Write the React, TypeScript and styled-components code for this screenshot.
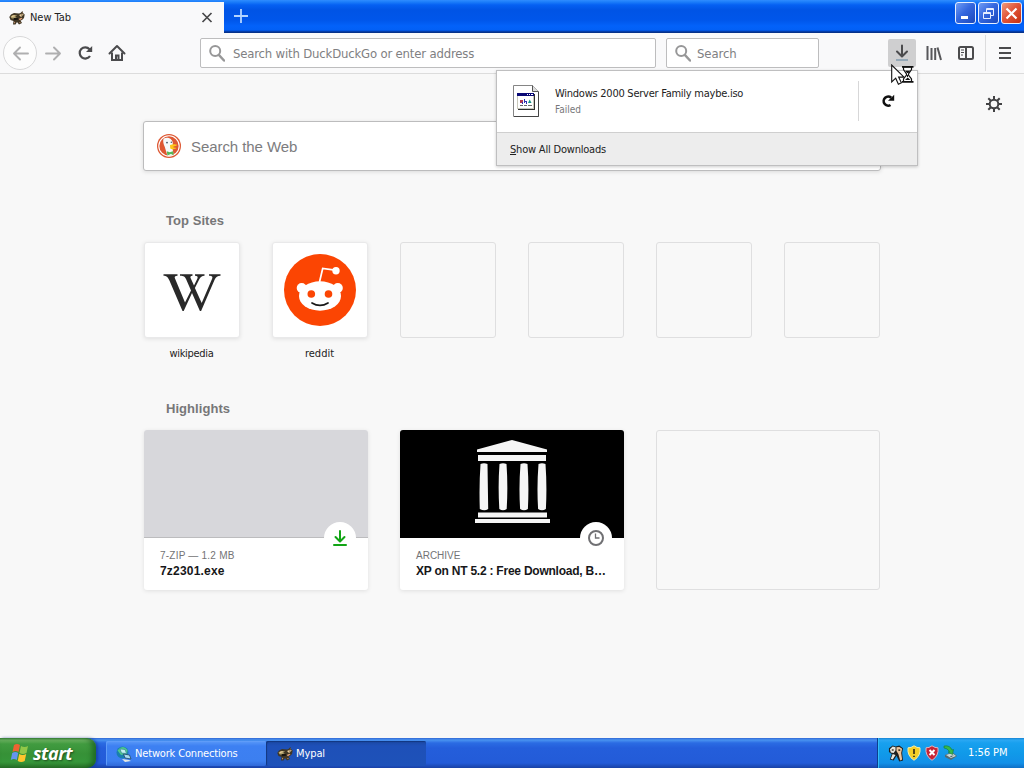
import React from "react";
import styled, { createGlobalStyle } from "styled-components";

const tahoma = `"DejaVu Sans Condensed", "DejaVu Sans", sans-serif`;
const arial = `"Liberation Sans", Arial, sans-serif`;

const GlobalStyle = createGlobalStyle`
  * { box-sizing: border-box; }
  body { margin: 0; background: #f9f9fa; overflow: hidden; }
  svg { display: block; flex: none; }
`;

const Screen = styled.div`
  position: relative;
  width: 1024px;
  height: 768px;
  display: flex;
  flex-direction: column;
  background: #f8f8f8;
  font-family: ${tahoma};
  font-stretch: condensed;
  font-size: 11px;
  color: #222;
  overflow: hidden;
`;

const Text = styled.span<{ $size?: number; $track?: number; $color?: string; $bold?: boolean; $sans?: boolean; $lh?: number }>`
  font-family: ${(p) => (p.$sans ? arial : tahoma)};
  font-size: ${(p) => p.$size ?? 11}px;
  line-height: ${(p) => p.$lh ?? 16}px;
  letter-spacing: ${(p) => p.$track ?? 0}px;
  color: ${(p) => p.$color ?? "#222"};
  font-weight: ${(p) => (p.$bold ? 700 : 400)};
  white-space: nowrap;
`;

const TitleBar = styled.header`
  height: 33px;
  flex: none;
  display: flex;
  align-items: flex-start;
  background: linear-gradient(#2f8cff 0, #1b7dfa 2px, #0560f2 5px, #0054e5 10px, #0056ea 20px, #0362fa 26px, #0260f6 30px, #0147c8 31px, #06318a 32px, #06318a 33px);
`;

const Tab = styled.div`
  width: 224px;
  height: 31px;
  margin-top: 2px;
  padding: 0 11px 0 9px;
  display: flex;
  align-items: center;
  gap: 5px;
  background: #f9f9fa;
`;

const TabClose = styled.div`
  margin-left: auto;
`;

const NewTab = styled.div`
  padding: 9px 0 0 10px;
`;

const WindowButtons = styled.div`
  margin: 2px 2px 0 auto;
  display: flex;
  gap: 2px;
`;

const WindowButton = styled.div<{ $close?: boolean }>`
  width: 21px;
  height: 22px;
  border: 1px solid #e6efff;
  border-radius: 3px;
  display: grid;
  place-items: center;
  background: ${(p) =>
    p.$close
      ? "linear-gradient(135deg, #ee9a7c, #e2573a 45%, #c53010)"
      : "linear-gradient(135deg, #6f9cf4, #3467df 45%, #1b48bb)"};
`;

const Toolbar = styled.nav`
  height: 41px;
  flex: none;
  display: flex;
  align-items: center;
  padding: 0 4px 0 3px;
  background: #f9f9fa;
  border-bottom: 1px solid #dcdcdc;
`;

const BackButton = styled.div`
  width: 34px;
  height: 34px;
  border: 1px solid #d8d8d9;
  border-radius: 50%;
  display: grid;
  place-items: center;
  background: #fdfdfd;
`;

const ToolIcon = styled.div<{ $active?: boolean; $width?: number }>`
  width: ${(p) => p.$width ?? 32}px;
  height: 28px;
  display: grid;
  place-items: center;
  border-radius: 2px;
  background: ${(p) => (p.$active ? "#cfcfd0" : "transparent")};
`;

const Field = styled.div<{ $width: number; $left: number; $gap: number }>`
  width: ${(p) => p.$width}px;
  height: 30px;
  margin-left: ${(p) => p.$left}px;
  padding: 1px 0 0 8px;
  display: flex;
  align-items: center;
  gap: ${(p) => p.$gap}px;
  background: #fff;
  border: 1px solid #bdbdbe;
  border-radius: 2px;
`;

const ToolEnd = styled.div`
  margin-left: auto;
  display: flex;
  align-items: center;
`;

const ToolDivider = styled.div`
  width: 1px;
  height: 36px;
  margin: 0 4px 0 5px;
  background: #dcdcdd;
`;

const Page = styled.main`
  flex: 1;
  display: flex;
  justify-content: space-between;
  padding-left: 143px;
`;

const Column = styled.div`
  width: 738px;
  padding-top: 47px;
`;

const Settings = styled.div`
  padding: 22px 22px 0 0;
`;

const WebSearch = styled.div`
  height: 50px;
  display: flex;
  align-items: center;
  gap: 9px;
  padding-left: 12px;
  background: #fff;
  border: 1px solid #bcbcbd;
  border-radius: 3px;
  box-shadow: 0 1px 4px rgba(0, 0, 0, 0.12);
`;

const WebSearchHint = styled.span`
  padding-top: 2px;
  font: 400 15px/18px ${arial};
  letter-spacing: -0.07px;
  color: #7c7c7e;
`;

const SectionTitle = styled.h2<{ $top: number }>`
  margin: ${(p) => p.$top}px 0 0 23px;
  height: 16px;
  font: 700 13px/16px ${arial};
  letter-spacing: 0.05px;
  color: #777778;
`;

const Sites = styled.div`
  margin: 13px 0 0 1px;
  display: flex;
  gap: 32px;
`;

const Site = styled.div`
  width: 96px;
  height: 120px;
  display: flex;
  flex-direction: column;
  align-items: center;
  gap: 8px;
`;

const SiteName = styled.div`
  height: 16px;
  width: 95px;
  align-self: flex-start;
  text-align: center;
`;

const Tile = styled.div<{ $empty?: boolean }>`
  flex: none;
  width: 96px;
  height: 96px;
  display: grid;
  place-items: center;
  border-radius: 3px;
  border: 1px solid ${(p) => (p.$empty ? "#dfdfe0" : "#e9e9ea")};
  background: ${(p) => (p.$empty ? "transparent" : "#fff")};
  box-shadow: ${(p) => (p.$empty ? "none" : "0 1px 4px rgba(12, 12, 13, 0.1)")};
`;

const Cards = styled.div`
  margin: 13px 0 0 1px;
  display: flex;
  gap: 32px;
`;

const Card = styled.article<{ $empty?: boolean }>`
  width: 224px;
  height: 160px;
  border-radius: 3px;
  border: ${(p) => (p.$empty ? "1px solid #dfdfe0" : "none")};
  background: ${(p) => (p.$empty ? "transparent" : "#fff")};
  box-shadow: ${(p) => (p.$empty ? "none" : "0 1px 4px rgba(12, 12, 13, 0.1)")};
`;

const Preview = styled.div<{ $color: string }>`
  position: relative;
  height: 108px;
  display: flex;
  justify-content: center;
  border-radius: 3px 3px 0 0;
  border-bottom: 1px solid ${(p) => (p.$color === "#000" ? "#000" : "#bcbcbe")};
  background: ${(p) => p.$color};
`;

const Badge = styled.div`
  position: absolute;
  right: 12px;
  bottom: -17px;
  width: 32px;
  height: 32px;
  display: grid;
  place-items: center;
  border-radius: 50%;
  background: #fff;
`;

const CardText = styled.div`
  padding: 10px 16px 0;
  display: flex;
  flex-direction: column;
`;

const Panel = styled.section`
  position: absolute;
  left: 496px;
  top: 70px;
  width: 422px;
  height: 96px;
  border: 1px solid #bfbfc0;
  background: #fff;
  box-shadow: 0 1px 3px rgba(0, 0, 0, 0.2);
`;

const DownloadRow = styled.div`
  height: 62px;
  display: flex;
  align-items: center;
  padding: 0 0 1px 16px;
  border-bottom: 1px solid #cfcfcf;
`;

const DownloadText = styled.div`
  flex: 1;
  margin-left: 16px;
  padding-top: 1px;
  display: flex;
  flex-direction: column;
`;

const Retry = styled.div`
  width: 59px;
  height: 40px;
  display: grid;
  place-items: center;
  border-left: 1px solid #d7d7d8;
`;

const ShowAll = styled.div`
  height: 32px;
  padding: 9px 13px 7px;
  display: flex;
  background: #ededed;
`;

const Cursor = styled.div`
  position: absolute;
  left: 891px;
  top: 64px;
`;

const Taskbar = styled.footer`
  height: 30px;
  flex: none;
  display: flex;
  background: linear-gradient(#3168d5 0, #4993f0 2px, #2b6be3 5px, #245edb 10px, #235bd8 25px, #1941a5 30px);
`;

const Start = styled.div`
  width: 96px;
  height: 30px;
  padding: 0 0 0 10px;
  display: flex;
  align-items: center;
  gap: 4px;
  border-radius: 0 9px 9px 0;
  background: linear-gradient(#3f8a3e 0, #6cb562 2px, #419b40 6px, #369137 16px, #36963a 24px, #2b752b 30px);
  box-shadow: inset -4px 0 5px rgba(14, 76, 20, 0.55), 2px 0 3px rgba(12, 50, 130, 0.55);
`;

const StartLabel = styled.span`
  font: italic 700 18px/24px "Open Sans", "Noto Sans", sans-serif;
  letter-spacing: -0.45px;
  color: #fff;
  text-shadow: 1px 1px 2px #1d4d1c;
`;

const Tasks = styled.div`
  flex: 1;
  display: flex;
  padding: 3px 0 2px 10px;
`;

const Task = styled.div<{ $active?: boolean }>`
  width: 160px;
  display: flex;
  align-items: center;
  gap: 3px;
  padding-left: ${(p) => (p.$active ? 11 : 10)}px;
  border-radius: 2px;
  background: ${(p) =>
    p.$active ? "linear-gradient(#1b48a2, #1e50b8 5px, #1e52b9)" : "linear-gradient(#5b9af9, #3d80f2 5px, #3c7ff0 20px, #3069d8)"};
  box-shadow: ${(p) => (p.$active ? "inset 1px 1px 1px #123780" : "inset 1px 1px 0 #5f9cf8")};
`;

const TaskName = styled.div`
  padding-top: 1px;
`;

const Tray = styled.div`
  width: 147px;
  display: flex;
  align-items: center;
  gap: 2px;
  padding: 0 0 0 10px;
  border-left: 1px solid #0c3f8e;
  background: linear-gradient(#1683d3 0, #2ba8f3 2px, #18a0ef 5px, #109ae9 15px, #1290e8 25px, #0f6fc5 30px);
  box-shadow: inset 1px 0 0 #34bcf8;
`;

const Clock = styled.span`
  margin-left: 8px;
`;

function Magnifier() {
  return (
    <svg width="16" height="18" viewBox="0 0 16 18" fill="none" stroke="#979798">
      <circle cx="6.2" cy="6" r="5" strokeWidth="2" />
      <path d="M9.8 9.9 15 15.5" strokeWidth="2.4" strokeLinecap="round" />
    </svg>
  );
}

function Arrow({ back }: { back?: boolean }) {
  return (
    <svg width="17" height="15" viewBox="0 0 17 15" fill="none" stroke="#afafb0" strokeWidth="1.9" strokeLinecap="round" strokeLinejoin="round">
      <path d={back ? "M8 1.5 2 7.5l6 6M2 7.5h14" : "M9 1.5 15 7.5l-6 6M15 7.5H1"} />
    </svg>
  );
}

function Raccoon() {
  return (
    <svg width="16" height="16" viewBox="0 0 16 16">
      <path d="M.3 7 2 4.500 5 3l5 .500L11.500 3l2-2L14 3l1.700 1.500L15 8l-2 2-1.500.500L13 13l-3 1.500L8 12l-1.500 2.500H4L4.500 11 1.500 10z" fill="#413724" />
      <path d="M1.500 6.500 4 5l4 .2L6 7l2 1-2 1-3.500-.700z" fill="#b0a16c" />
      <path d="M4.500 8h4l1.500 1.500-5 .7z" fill="#17140f" />
      <path d="m10 5 3-1.200 1.800.8L12 7zM2.500 6l3-.8.5.7-3 1z" fill="#efcf9c" />
      <path d="m9.500 9 3-1.200 1 .8-2.500 1.700zM5 13.500l.4-2 .9 1.200zM10 12.500l1.200-.700.300 1.200zM12.800 3.200l.500-1 .3 1z" fill="#dfa17a" />
      <path d="M12.400 4.500h1v1h-1z" fill="#111" />
    </svg>
  );
}

function Duck() {
  return (
    <svg width="26" height="26" viewBox="0 0 26 26">
      <circle cx="13" cy="13" r="12" fill="#de5833" />
      <circle cx="13" cy="13" r="10.2" fill="none" stroke="#fff" strokeWidth="1.1" />
      <path d="M7.500 5.800c3-2.300 9-.8 9.300 4.400l-.3 4.800.8 5.500-2 2.200-3.800.2L8.800 14C7.400 11 6.800 8.500 7.500 5.800z" fill="#f6fafb" />
      <path d="M14 12c3-1 5.600-.8 7.200-.2-.8 1.600-4 1.300-4 2.400 1 .6 2.800.2 3.300.9-.9 1.500-5.300 1.500-6.300.1z" fill="#fdc61a" />
      <path d="m10.800 18.200 3 1 3.200-1 .7 3.700-2.900-.8-3.400 1.300z" fill="#55b957" />
      <circle cx="11" cy="9.600" r=".9" fill="#3d5362" />
      <circle cx="15.300" cy="9.200" r=".7" fill="#3d5362" />
    </svg>
  );
}

function WikipediaMark() {
  return (
    <svg width="58" height="46" viewBox="0 -7 58 46" fill="#292929">
      <path d="M.5.3H14.500V1.700C12 1.900 11.200 2.600 12 4.500L22 28.500 28 16.500 23 5C21.800 2.500 21 1.900 17 1.700V.3H29.500V1.700C27.500 1.900 27 2.600 27.700 4.300L31 11.600 34.300 4.700C35.200 2.700 34.500 1.900 32 1.700V.3H41.500V1.700C38.800 1.900 37.600 2.700 36.300 5.200L31.900 13.900 38.700 29 49 5C50 2.600 49.200 1.900 46 1.700V.3H57.500V1.700C54.500 1.900 52.800 3 51.600 5.700L38.100 37H36.900L29 18.900 20.700 37H19.500L6.200 6C4.700 2.700 3.300 1.900 .5 1.700Z" />
    </svg>
  );
}

function RedditMark() {
  return (
    <svg width="72" height="72" viewBox="0 0 72 72">
      <circle cx="36" cy="36" r="36" fill="#fb4503" />
      <path d="m35.500 28 3.200-13.500 12.300 1.700" fill="none" stroke="#fff" strokeWidth="1.7" />
      <circle cx="52" cy="16.700" r="3.700" fill="#fff" />
      <circle cx="17.700" cy="34" r="5" fill="#fff" />
      <circle cx="53.800" cy="34" r="5" fill="#fff" />
      <ellipse cx="36" cy="42" rx="21" ry="14.700" fill="#fff" />
      <circle cx="27.300" cy="40" r="3.800" fill="#fb4503" />
      <circle cx="44.500" cy="40" r="3.800" fill="#fb4503" />
      <path d="M28 49q8 4.900 16 0" fill="none" stroke="#181818" strokeWidth="1.7" strokeLinecap="round" />
    </svg>
  );
}

function Temple() {
  return (
    <svg width="78" height="86" viewBox="0 0 78 86" fill="#f5f5f5">
      <path d="M3 10.500 38 1l35 9.500v2.500H3zM4 16h68v6H4zM4 73.500h69v5H4zM1 80h75v4H1z" />
      <path d="M6.500 25q3.500-1.500 7 0l.7 45q-3.700 2.500-8.400 0-.8-23 .7-45zM25.500 25q3.500-1.500 7 0 1.600 22 .2 45-3.700 2.500-7.400 0-1.400-23 .2-45zM46.500 25q3.500-1.500 7 0 1.600 22 .4 45-3.900 2.500-7.800 0-1.400-22 .4-45zM64.500 25q3.500-1.500 7 0 1.600 22 .4 45-3.900 2.500-7.800 0-1.400-22 .4-45z" />
    </svg>
  );
}

function DownloadArrow({ color, dashed }: { color: string; dashed?: boolean }) {
  return (
    <svg width="16" height="18" viewBox="0 0 16 18" fill="none" stroke={color} strokeWidth="2">
      <path d={dashed ? "M8 1.500v10M3 7.500l5 5 5-5" : "M8 2v9M3.500 8l4.500 4.500L12.500 8"} strokeLinejoin="round" strokeLinecap="round" />
      <path d="M2 16h12" stroke={dashed ? "#819baf" : color} strokeWidth={dashed ? 1.5 : 2} strokeLinecap={dashed ? "butt" : "round"} />
    </svg>
  );
}

function FileIcon() {
  return (
    <svg width="26" height="32" viewBox="0 0 26 32">
      <path d="M.5.500h19l6 6v25H.500z" fill="#fff" stroke="#858585" />
      <path d="M25.500 7v24.500H1" fill="none" stroke="#444" />
      <path d="M19.500.500v6h6" fill="#ddd" stroke="#555" />
      <path d="M5 9h17v16H5z" fill="#303030" />
      <path d="M4 8h17v16H4z" fill="#c9c9bb" />
      <path d="M5 11h15v12H5z" fill="#fff" />
      <path d="M4 8h17v3H4z" fill="#090975" />
      <path d="M14 9h1v1h-1zM16 9h1v1h-1zM18 9h2v1h-2z" fill="#fff" />
      <path d="M7 15h3v3H7z" fill="#b33950" />
      <path d="M9 17h1v2H9zM11 14h1v4h-1zM12 16h2v1h-2zM13 17h1v2h-1z" fill="#3030af" />
      <path d="m15 18 1.700-3.500L18.500 18z" fill="#169183" />
      <path d="M7 20.500h3M11 20.500h3M15 20.500h4" stroke="#666" />
    </svg>
  );
}

function FlagLogo() {
  return (
    <svg width="19" height="18" viewBox="0 0 19 18">
      <path d="M4 1q3-2 6 0L8.500 8q-3-2-6 0z" fill="#ed6332" />
      <path d="M11 2q3.500 1.800 7 0l-1.500 7q-3.500 2-7 0z" fill="#91c748" />
      <path d="M2.200 9q3-2 6 0L6.800 16q-3-2-6 0z" fill="#6595ee" />
      <path d="M9.200 10q3.500 1.800 7 0l-1.500 7q-3.500 2-7 0z" fill="#ffc52d" />
    </svg>
  );
}

function NetworkIcon() {
  return (
    <svg width="16" height="16" viewBox="0 0 16 16">
      <circle cx="6.500" cy="6.500" r="6" fill="#187fae" />
      <path d="M1.500 4.500Q7-2 11.500 4L11 7.500 5 9z" fill="#4fc98c" />
      <path d="m4 3 5 .500 1.500 4-5-.500z" fill="#c3f2f0" stroke="#2b7590" strokeWidth=".6" />
      <path d="m7.500 8 6 1 1.500 4-6-1z" fill="#a9dbef" stroke="#1d4864" strokeWidth=".8" />
      <path d="m6 13 7 1 2 1-6 1z" fill="#e5e8e2" />
    </svg>
  );
}

function KeysIcon() {
  return (
    <svg width="16" height="18" viewBox="0 0 17 18">
      <path d="m1 4 4-3 3 1 4-1 4 3-1 5 1 8-4 1-3-6-3 5-4-1 2-6-3-2z" fill="#20211f" />
      <path d="m2 5 3-3 3 1 0 3-2 3-3-.500zM5 10l3 1-3 5-2-1z" fill="#e6e6df" />
      <path d="m9 3 3-.500 3 2-1 4.500 1 7-2 1-2-7-2-3z" fill="#edc49a" />
      <path d="M4 5h2v1.500H4zM11 5h2v2h-2z" fill="#473b25" />
    </svg>
  );
}

function Shield({ alert }: { alert?: boolean }) {
  return (
    <svg width="16" height="16" viewBox="0 0 16 16">
      <path d="M8 .8Q11 3 14 2.800q1 8-6 12.500Q1 10.800 2 2.800 5 3 8 .8z" fill={alert ? "#c62435" : "#f5cf27"} stroke={alert ? "#ddb4c2" : "#f2edae"} />
      <path d={alert ? "m5.500 5 5 5m0-5-5 5" : "M8 4v5m0 1.700V12"} stroke={alert ? "#fff" : "#554818"} strokeWidth="2" />
    </svg>
  );
}

function HardwareIcon() {
  return (
    <svg width="16" height="18" viewBox="0 0 16 18">
      <path d="m3 11 7-3 5 4-6 4-6-3z" fill="#546b72" />
      <path d="m4 11 6-2 4 3-5 2z" fill="#c8d8d5" />
      <path d="m8 12 4-.500-3 1.500z" fill="#34464c" />
      <path d="M2 2q6-1 8 4l1.500-.500-1 5L6 8l1.500-.500Q5 4 2 4z" fill="#35b94a" stroke="#137b35" strokeWidth=".6" />
    </svg>
  );
}

export default function App() {
  return (
    <Screen>
      <GlobalStyle />
      <TitleBar>
        <Tab>
          <Raccoon />
          <Text $track={-0.05}>New Tab</Text>
          <TabClose>
            <svg width="12" height="12" viewBox="0 0 12 12" stroke="#48484a" strokeWidth="1.7">
              <path d="m1.500 1 9 9m0-9-9 9" />
            </svg>
          </TabClose>
        </Tab>
        <NewTab>
          <svg width="14" height="14" viewBox="0 0 14 14" stroke="#b3d4ff" strokeWidth="1.8">
            <path d="M7 0v14M0 7h14" />
          </svg>
        </NewTab>
        <WindowButtons>
          <WindowButton>
            <svg width="17" height="17" viewBox="0 0 17 17"><path d="M4 11h7v3H4z" fill="#fff" /></svg>
          </WindowButton>
          <WindowButton>
            <svg width="17" height="17" viewBox="0 0 17 17" fill="none" stroke="#e6eeff">
              <path d="M6.500 7V3.500h7v7h-3M6 4.500h8" />
              <path d="M3.500 7.500h7v6h-7zM3 8.500h8" />
            </svg>
          </WindowButton>
          <WindowButton $close>
            <svg width="17" height="17" viewBox="0 0 17 17" stroke="#fff" strokeWidth="2.2"><path d="m3.500 3.500 10 10m0-10-10 10" /></svg>
          </WindowButton>
        </WindowButtons>
      </TitleBar>

      <Toolbar>
        <BackButton><Arrow back /></BackButton>
        <ToolIcon><Arrow /></ToolIcon>
        <ToolIcon>
          <svg width="16" height="16" viewBox="0 0 16 16" fill="none" stroke="#4b4b4d" strokeWidth="2.200">
            <path d="M12.500 4.200A5.600 5.600 0 1 0 13 11" />
            <path d="M15.200 1v6H9z" fill="#4b4b4d" stroke="none" />
          </svg>
        </ToolIcon>
        <ToolIcon>
          <svg width="18" height="18" viewBox="0 0 18 18" fill="none" stroke="#4b4b4d" strokeWidth="2">
            <path d="m1.500 9.500 7.500-7.500 7.500 7.500" strokeLinecap="round" strokeLinejoin="round" />
            <path d="M4 8.500V16h10V8.500M8 16v-4.500h2.500V16" />
          </svg>
        </ToolIcon>
        <Field $width={456} $left={67} $gap={8}>
          <Magnifier />
          <Text $size={13} $color="#808082" $track={-0.18}>Search with DuckDuckGo or enter address</Text>
        </Field>
        <Field $width={153} $left={10} $gap={6}>
          <Magnifier />
          <Text $size={13} $color="#808082" $track={-0.1}>Search</Text>
        </Field>
        <ToolEnd>
          <ToolIcon $active $width={28}><DownloadArrow color="#4b4b4d" dashed /></ToolIcon>
          <ToolIcon $width={36}>
            <svg width="16" height="16" viewBox="0 0 16 16" stroke="#57575a" strokeWidth="2">
              <path d="M1.500 1v14M5.500 3v12M9.200 3v12M11.500 2.500 15 15" />
            </svg>
          </ToolIcon>
          <ToolIcon $width={28}>
            <svg width="16" height="14" viewBox="0 0 16 14" fill="none" stroke="#4b4b4d" strokeWidth="2">
              <rect x="1" y="1" width="14" height="12" rx="1.5" />
              <path d="M8 1v12" />
              <path d="M3 4h3M3 6.500h3M3 9h2" strokeWidth="1" />
            </svg>
          </ToolIcon>
          <ToolDivider />
          <ToolIcon $width={30}>
            <svg width="12" height="14" viewBox="0 0 12 14" stroke="#4b4b4d" strokeWidth="2"><path d="M0 2h12M0 7h12M0 12h12" /></svg>
          </ToolIcon>
        </ToolEnd>
      </Toolbar>

      <Page>
        <Column>
          <WebSearch>
            <Duck />
            <WebSearchHint>Search the Web</WebSearchHint>
          </WebSearch>
          <SectionTitle $top={42}>Top Sites</SectionTitle>
          <Sites>
            <Site><Tile><WikipediaMark /></Tile><SiteName><Text $track={-0.3}>wikipedia</Text></SiteName></Site>
            <Site><Tile><RedditMark /></Tile><SiteName><Text>reddit</Text></SiteName></Site>
            {[1, 2, 3, 4].map((n) => <Site key={n}><Tile $empty /></Site>)}
          </Sites>
          <SectionTitle $top={39}>Highlights</SectionTitle>
          <Cards>
            <Card>
              <Preview $color="#d7d7db"><Badge><DownloadArrow color="#12a515" /></Badge></Preview>
              <CardText>
                <Text $sans $size={10} $track={0.22} $lh={15} $color="#737375">7-ZIP — 1.2 MB</Text>
                <Text $sans $size={12} $track={0.2} $bold $color="#171719">7z2301.exe</Text>
              </CardText>
            </Card>
            <Card>
              <Preview $color="#000">
                <svg width="80" height="96" viewBox="-2 -9 80 96"><Temple /></svg>
                <Badge>
                  <svg width="18" height="18" viewBox="0 0 18 18" fill="none" stroke="#707073">
                    <circle cx="9" cy="9" r="7" strokeWidth="2" /><path d="M8.500 4.500V9H12.500" strokeWidth="1.3" />
                  </svg>
                </Badge>
              </Preview>
              <CardText>
                <Text $sans $size={10} $lh={15} $color="#737375">ARCHIVE</Text>
                <Text $sans $size={12} $track={-0.23} $bold $color="#171719">XP on NT 5.2 : Free Download, B…</Text>
              </CardText>
            </Card>
            <Card $empty />
          </Cards>
        </Column>
        <Settings>
          <svg width="16" height="16" viewBox="0 0 16 16" fill="none" stroke="#424244" strokeWidth="2">
            <circle cx="8" cy="8" r="4.3" />
            <path d="M8 0v3.500M8 12.500V16M0 8h3.500M12.500 8H16M2.300 2.300l2.500 2.500M11.200 11.200l2.500 2.500M13.700 2.300l-2.500 2.500M4.800 11.200l-2.500 2.500" />
          </svg>
        </Settings>
      </Page>

      <Taskbar>
        <Start><FlagLogo /><StartLabel>start</StartLabel></Start>
        <Tasks>
          <Task><NetworkIcon /><Text $color="#fff" $track={-0.16}>Network Connections</Text></Task>
          <Task $active><Raccoon /><TaskName><Text $color="#fff" $track={-0.1}>Mypal</Text></TaskName></Task>
        </Tasks>
        <Tray>
          <KeysIcon /><Shield /><Shield alert /><HardwareIcon />
          <Clock><Text $color="#fff" $track={-0.05}>1:56 PM</Text></Clock>
        </Tray>
      </Taskbar>

      <Panel>
        <DownloadRow>
          <FileIcon />
          <DownloadText>
            <Text $track={-0.25}>Windows 2000 Server Family maybe.iso</Text>
            <Text $size={10} $color="#77777a">Failed</Text>
          </DownloadText>
          <Retry>
            <svg width="14" height="14" viewBox="0 0 14 14" fill="none" stroke="#111" strokeWidth="2.600">
              <path d="M10.200 3.800A4.500 4.500 0 1 0 9.500 11" /><path d="M13.200.8v6H7z" fill="#111" stroke="none" />
            </svg>
          </Retry>
        </DownloadRow>
        <ShowAll><Text $track={-0.2}><u>S</u>how All Downloads</Text></ShowAll>
      </Panel>

      <Cursor>
        <svg width="24" height="22" viewBox="0 0 24 22">
          <path d="M.7 1v17l4-3.800 2.700 6 3-1.400-2.800-5.700H13z" fill="#fff" stroke="#111" strokeWidth="1.1" />
          <path d="M12.500 3h8v2.500l-3 4.500v1l3 4v2.500h-8V15l3-4v-1l-3-4.500z" fill="#fff" stroke="#111" strokeWidth="1.200" />
          <path d="M11 2.800h11.500M11 17.800h11.500" stroke="#111" strokeWidth="1.800" />
          <path d="M14 6.500h5.500l-2 2.500h-1.500zM16 11h1v2h-1zM14 16l2.700-2.500L19.500 16z" fill="#111" />
        </svg>
      </Cursor>
    </Screen>
  );
}
